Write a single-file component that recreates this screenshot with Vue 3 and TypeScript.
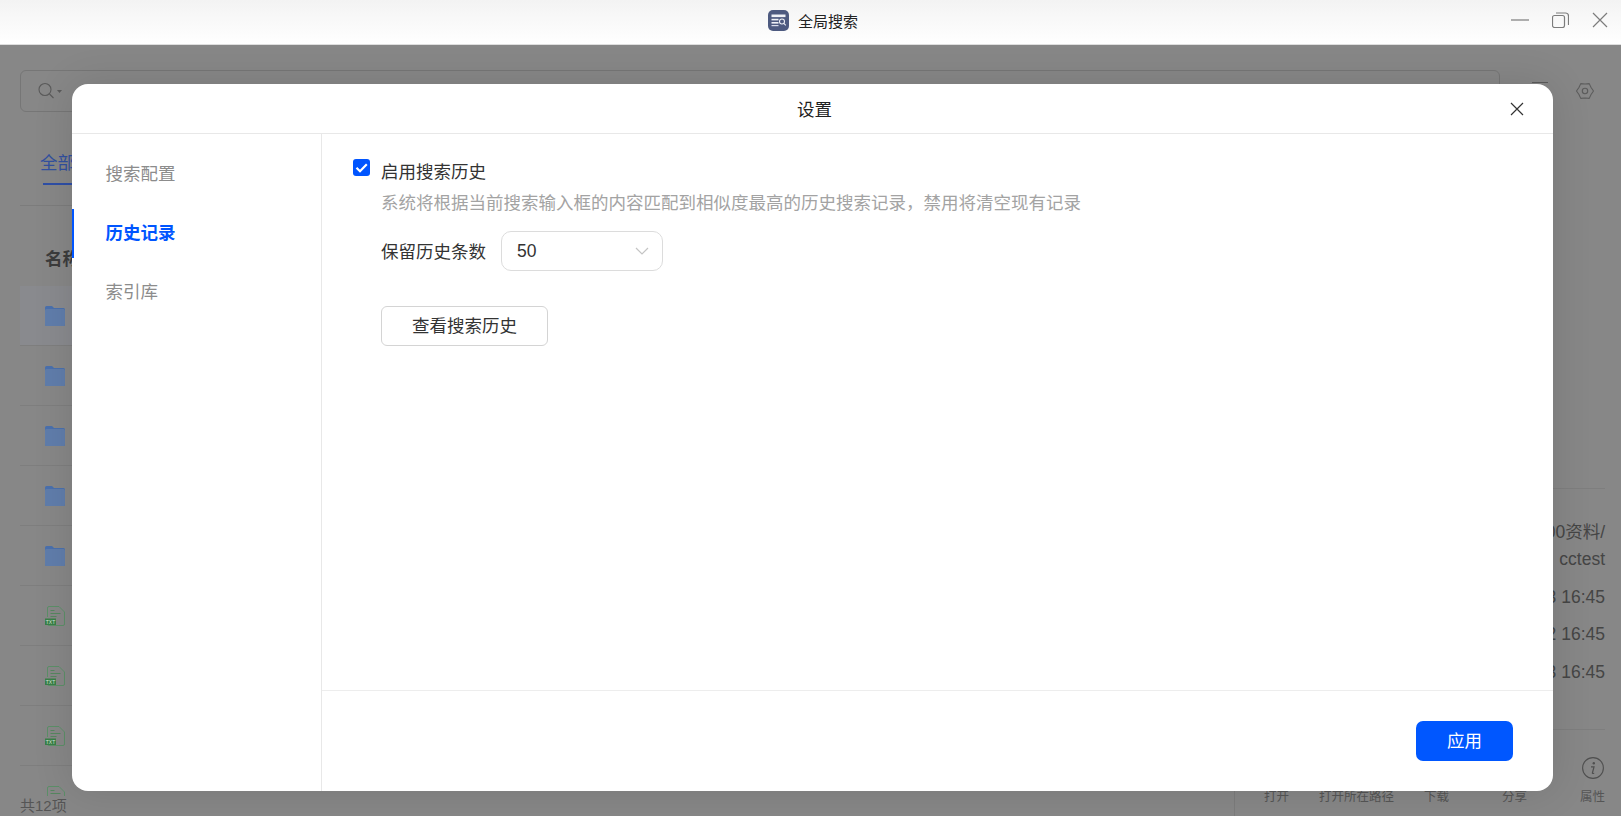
<script setup lang="ts">
const rows: Array<'folder' | 'txt'> = ['folder', 'folder', 'folder', 'folder', 'folder', 'txt', 'txt', 'txt', 'txt']
const tools = ['打开', '打开所在路径', '下载', '分享', '属性']
const menu = [
  { label: '搜索配置', active: false },
  { label: '历史记录', active: true },
  { label: '索引库', active: false },
]
</script>

<template>
  <div class="page">
    <header class="titlebar">
      <div></div>
      <div class="title">
        <svg class="app-icon" width="21" height="21" viewBox="0 0 21 21">
          <rect width="21" height="21" rx="5" fill="#4d5a80" />
          <rect x="3.5" y="4.500" width="14" height="2.600" fill="#eef0f6" />
          <rect x="3.5" y="8.800" width="7" height="1.600" fill="#eef0f6" />
          <rect x="3.5" y="12" width="7" height="1.600" fill="#eef0f6" />
          <rect x="3.5" y="15" width="7" height="1.200" fill="#d9dcea" />
          <circle cx="14" cy="11.500" r="2.500" fill="none" stroke="#eef0f6" stroke-width="1.100" />
          <path d="M15.800 13.300l2 2" stroke="#eef0f6" stroke-width="1.100" />
        </svg>
        <span>全局搜索</span>
      </div>
      <div class="win-controls">
        <svg width="18" height="16" viewBox="0 0 18 16"><path d="M0 8h18" class="win-stroke" /></svg>
        <svg width="17" height="16" viewBox="0 0 17 16">
          <rect x="0.5" y="3.5" width="12" height="12" rx="2" class="win-stroke" />
          <path d="M4 1h9.5a3 3 0 0 1 3 3v9" class="win-stroke" />
        </svg>
        <svg width="16" height="16" viewBox="0 0 16 16"><path d="M1 1l14 14M15 1L1 15" class="win-stroke" /></svg>
      </div>
    </header>

    <main class="main">
      <div class="search-row">
        <div class="search-box">
          <svg width="24" height="18" viewBox="0 0 24 18">
            <circle cx="7" cy="7.5" r="6" fill="none" stroke="#5a5a5a" stroke-width="1.100" />
            <path d="M11.500 12l4 4" stroke="#5a5a5a" stroke-width="1.100" />
            <path d="M19 8h5l-2.500 3z" fill="#5a5a5a" />
          </svg>
        </div>
        <div class="hidden-tool"></div>
        <svg class="gear" width="18" height="18" viewBox="0 0 18 18">
          <path d="M17.500 9L15.060 5.500 13.250 1.640 9 2 4.750 1.640 2.940 5.500 .5 9 2.940 12.500 4.750 16.360 9 16 13.250 16.360 15.060 12.500z" fill="none" stroke="#5c5c5c" stroke-width="1.100" stroke-linejoin="round" />
          <circle cx="9" cy="9" r="2.700" fill="none" stroke="#5c5c5c" stroke-width="1.100" />
        </svg>
      </div>

      <div class="tabs">
        <span class="tab">全部</span>
      </div>

      <div class="body">
        <section class="list-col">
          <div class="list-head">名称</div>
          <div class="list">
            <div v-for="(row, i) in rows" :key="i" class="row" :class="{ first: i === 0 }">
              <svg v-if="row === 'folder'" width="20" height="20" viewBox="0 0 20 20">
                <path d="M1.500 0h5.500l2 2h9.500A1.500 1.500 0 0 1 20 3.500V18.500a1.500 1.500 0 0 1-1.500 1.500h-17A1.500 1.500 0 0 1 0 18.500V1.500A1.500 1.500 0 0 1 1.500 0z" fill="#4a70ad" />
                <path d="M0 4.500a1.500 1.500 0 0 1 1.500-1.500h17A1.500 1.500 0 0 1 20 4.500V18.500a1.500 1.500 0 0 1-1.500 1.500h-17A1.500 1.500 0 0 1 0 18.500z" fill="#607dab" />
              </svg>
              <svg v-else width="20" height="20" viewBox="0 0 20 20">
                <path d="M2.500 11V2a1.500 1.500 0 0 1 1.500-1.500h10l5.500 5.500v12a1.500 1.500 0 0 1-1.500 1.500H4a1.500 1.500 0 0 1-1.500-1.500" fill="none" stroke="#5c8f68" stroke-width="1" />
                <path d="M5.500 4.500h4M5.500 7.500h10M5.500 10.500h6" stroke="#55875f" stroke-width="1.100" />
                <template v-if="i < rows.length - 1">
                  <rect x="0" y="12.500" width="11" height="6.500" fill="#3a7f48" />
                  <text x="5.500" y="17.600" class="badge-text">TXT</text>
                </template>
              </svg>
            </div>
          </div>
          <div class="list-foot">共12项</div>
        </section>

        <aside class="detail">
          <div class="preview"></div>
          <div class="info">
            <div class="info-path">00资料/<br />cctest</div>
            <div class="info-line">3 16:45</div>
            <div class="info-line">2 16:45</div>
            <div class="info-line">3 16:45</div>
          </div>
          <div class="tools">
            <div v-for="tool in tools" :key="tool" class="tool">
              <svg v-if="tool === '属性'" width="22" height="22" viewBox="0 0 22 22">
                <circle cx="11" cy="11" r="10.400" fill="none" stroke="#4f4f4f" stroke-width="1.100" />
                <circle cx="11.800" cy="6.300" r="1.200" fill="#4f4f4f" />
                <path d="M9 9.800h3l-1.600 6.200c-.1.500.2.700 1.800.2" fill="none" stroke="#4f4f4f" stroke-width="1.200" />
              </svg>
              <span>{{ tool }}</span>
            </div>
          </div>
        </aside>
      </div>

      <div class="overlay">
        <div class="modal">
          <div class="modal-head">
            <span>设置</span>
            <svg class="modal-close" width="14" height="14" viewBox="0 0 14 14">
              <path d="M1 1l12 12M13 1L1 13" stroke="#333" stroke-width="1.200" fill="none" />
            </svg>
          </div>
          <div class="modal-body">
            <nav class="side">
              <div v-for="item in menu" :key="item.label" class="side-item" :class="{ active: item.active }">{{ item.label }}</div>
            </nav>
            <div class="content">
              <div class="settings">
                <div class="check-row">
                  <span class="checkbox">
                    <svg width="17" height="17" viewBox="0 0 17 17">
                      <path d="M3.500 8.800l3.500 3.500 6.800-7" fill="none" stroke="#fff" stroke-width="2.200" />
                    </svg>
                  </span>
                  <span class="check-label">启用搜索历史</span>
                </div>
                <p class="desc">系统将根据当前搜索输入框的内容匹配到相似度最高的历史搜索记录，禁用将清空现有记录</p>
                <div class="keep-row">
                  <span class="keep-label">保留历史条数</span>
                  <div class="select">
                    <span>50</span>
                    <svg width="14" height="8" viewBox="0 0 14 8">
                      <path d="M1 1l6 6 6-6" fill="none" stroke="#c4c4c4" stroke-width="1.200" />
                    </svg>
                  </div>
                </div>
                <button class="history-btn" type="button">查看搜索历史</button>
              </div>
              <div class="modal-foot">
                <button class="apply" type="button">应用</button>
              </div>
            </div>
          </div>
        </div>
      </div>
    </main>
  </div>
</template>

<style>
html,
body {
  margin: 0;
  overflow: hidden;
}
</style>

<style scoped>
.page {
  width: 1621px;
  height: 816px;
  display: flex;
  flex-direction: column;
  overflow: hidden;
  font-family: "Liberation Sans", "Noto Sans CJK SC", sans-serif;
  color: #333;
}
.titlebar {
  height: 44px;
  flex: none;
  box-sizing: content-box;
  border-bottom: 1px solid #dedede;
  background: linear-gradient(#f3f3f3, #ffffff);
  display: grid;
  grid-template-columns: 1fr auto 1fr;
  align-items: center;
}
.title {
  display: flex;
  align-items: center;
  gap: 9px;
  padding: 0 0 4px 5px;
  font-size: 15px;
  color: #222;
}
.app-icon {
  display: block;
}
.win-controls {
  display: flex;
  justify-content: flex-end;
  align-items: center;
  gap: 23px;
  padding: 0 13px 5px 0;
}
.win-stroke {
  fill: none;
  stroke: #7c7c7c;
  stroke-width: 1.2;
}
.main {
  position: relative;
  flex: 1;
  min-height: 0;
  display: flex;
  flex-direction: column;
  padding: 25px 16px 0 20px;
  background: #878787;
  color: #454545;
}
.search-row {
  display: flex;
  align-items: center;
  flex: none;
}
.search-box {
  width: 1480px;
  height: 42px;
  box-sizing: border-box;
  border: 1px solid #767676;
  border-radius: 6px;
  display: flex;
  align-items: center;
  padding-left: 17px;
}
.hidden-tool {
  width: 16px;
  height: 18px;
  margin-left: 32px;
  border-top: 1px solid #5a5a5a;
}
.gear {
  margin-left: 28px;
}
.tabs {
  flex: none;
  height: 94px;
  box-sizing: border-box;
  border-bottom: 1px solid #7c7c7c;
  padding: 39px 0 0 20px;
  width: 1214px;
}
.tab {
  position: relative;
  display: inline-block;
  font-size: 17.5px;
  line-height: 24px;
  color: #32509f;
  padding-bottom: 10px;
}
.tab::after {
  content: "";
  position: absolute;
  left: 3px;
  right: 0;
  bottom: 0;
  height: 2px;
  background: #2f4fa6;
}
.body {
  flex: 1;
  min-height: 0;
  display: flex;
}
.list-col {
  width: 1214px;
  flex: none;
  display: flex;
  flex-direction: column;
}
.list-head {
  flex: none;
  height: 80px;
  box-sizing: border-box;
  padding: 41px 0 0 25px;
  font-size: 17.5px;
  line-height: 24px;
  font-weight: 700;
  color: #3c3c3c;
}
.list {
  flex: 1;
  min-height: 0;
  overflow: hidden;
}
.row {
  height: 60px;
  box-sizing: border-box;
  border-bottom: 1px solid #7e7e7e;
  padding-left: 25px;
  display: flex;
  align-items: center;
}
.row.first {
  background: #898a8e;
}
.badge-text {
  font-size: 5px;
  fill: #d5e6d8;
  text-anchor: middle;
}
.list-foot {
  flex: none;
  height: 20px;
  line-height: 20px;
  font-size: 15px;
  color: #555;
}
.detail {
  flex: 1;
  min-width: 0;
  display: flex;
  flex-direction: column;
  border-left: 1px solid #7c7c7c;
}
.preview {
  flex: none;
  height: 282px;
  border-bottom: 1px solid #7e7e7e;
}
.info {
  flex: none;
  height: 241px;
  box-sizing: border-box;
  padding-top: 30px;
  border-bottom: 1px solid #7e7e7e;
  text-align: right;
  font-size: 17.5px;
  line-height: 27px;
}
.info-line {
  margin-top: 10.500px;
}
.tools {
  flex: 1;
  display: flex;
  align-items: flex-end;
  gap: 30px;
  padding: 0 0 9px 29px;
  font-size: 12.500px;
  line-height: 20px;
  color: #555;
}
.tool {
  display: flex;
  flex-direction: column;
  align-items: center;
  gap: 8px;
  white-space: nowrap;
}
.tool:nth-child(n + 4) {
  margin-left: 23px;
}
.overlay {
  position: absolute;
  inset: 0;
  display: flex;
  padding: 39px 68px 25px 72px;
}
.modal {
  flex: 1;
  min-width: 0;
  display: flex;
  flex-direction: column;
  background: #fff;
  border-radius: 16px;
  overflow: hidden;
  box-shadow: 0 0 40px rgba(0, 0, 0, 0.12);
  color: #333;
}
.modal-head {
  position: relative;
  flex: none;
  height: 50px;
  box-sizing: border-box;
  border-bottom: 1px solid #e8e8e8;
  display: flex;
  align-items: center;
  justify-content: center;
  padding-left: 4px;
  font-size: 17.5px;
  color: #222;
}
.modal-close {
  position: absolute;
  right: 29px;
  top: 18px;
}
.modal-body {
  flex: 1;
  min-height: 0;
  display: flex;
}
.side {
  width: 250px;
  flex: none;
  box-sizing: border-box;
  border-right: 1px solid #e8e8e8;
  padding-top: 15.500px;
  display: flex;
  flex-direction: column;
  gap: 10px;
}
.side-item {
  position: relative;
  height: 49px;
  line-height: 49px;
  padding-left: 33.5px;
  font-size: 17.5px;
  color: #8c8c8c;
}
.side-item.active {
  color: #0055ff;
  font-weight: 700;
}
.side-item.active::before {
  content: "";
  position: absolute;
  left: 0;
  top: 0;
  bottom: 0;
  width: 2px;
  background: #0055ff;
}
.content {
  flex: 1;
  min-width: 0;
  display: flex;
  flex-direction: column;
}
.settings {
  flex: 1;
  min-height: 0;
  padding: 25px 0 0 30.500px;
  font-size: 17.5px;
}
.check-row {
  display: flex;
  align-items: flex-start;
  gap: 11px;
}
.checkbox {
  width: 17px;
  height: 17px;
  flex: none;
  background: #0055ff;
  border-radius: 3px;
}
.checkbox svg {
  display: block;
}
.check-label {
  line-height: 26px;
  margin-left: 0.500px;
}
.desc {
  margin: 5px 0 0 28.500px;
  line-height: 26px;
  font-size: 17.5px;
  color: #a3a3a3;
}
.keep-row {
  display: flex;
  align-items: center;
  gap: 15px;
  margin: 15px 0 0 28.500px;
}
.keep-label {
  position: relative;
  top: -1px;
}
.select {
  width: 162px;
  height: 40px;
  box-sizing: border-box;
  border: 1px solid #dcdcdc;
  border-radius: 10px;
  display: flex;
  align-items: center;
  justify-content: space-between;
  padding: 0 13px 0 15px;
}
.history-btn {
  display: block;
  margin: 35px 0 0 28.500px;
  width: 167px;
  height: 40px;
  background: #fff;
  border: 1px solid #d4d4d4;
  border-radius: 6px;
  font: inherit;
  color: #333;
  padding: 0 0 4px;
}
.modal-foot {
  flex: none;
  height: 101px;
  box-sizing: border-box;
  border-top: 1px solid #ededed;
  display: flex;
  align-items: center;
  justify-content: flex-end;
  padding-right: 40px;
}
.apply {
  width: 97px;
  height: 40px;
  border: 0;
  border-radius: 7px;
  background: #0057ff;
  color: #fff;
  font: inherit;
  font-size: 17.5px;
  padding: 0 0 4px;
}
</style>
